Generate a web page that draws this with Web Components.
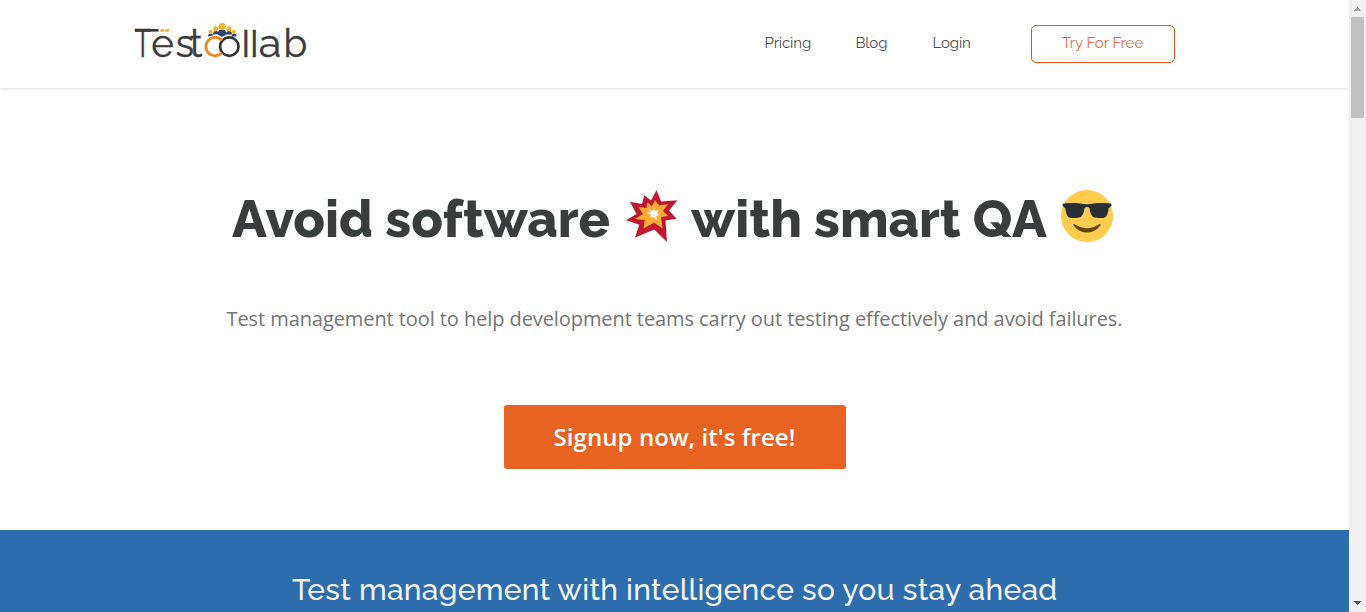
<!DOCTYPE html>
<html lang="en">
<head>
<meta charset="utf-8">
<title>Test Collab</title>
<style>
html,body{margin:0;height:612px;overflow:hidden;background:#fff}
</style>
</head>
<body>
<tc-page></tc-page>
<script>
const define=(name,html)=>{
  const t=document.createElement('template');t.innerHTML=html;
  customElements.define(name,class extends HTMLElement{
    constructor(){super();this.attachShadow({mode:'open'}).append(t.content.cloneNode(true));}
  });
};

define('tc-logo',`<style>:host{display:block;width:180px;height:50px}svg{display:block;overflow:visible}
text{font-family:Raleway,Lato,sans-serif;font-weight:400;font-size:38.5px;fill:#3b3b3b;stroke:#3b3b3b;stroke-width:.4px}
.l{font-family:Inter,sans-serif;font-weight:300;font-size:37px;stroke-width:.5px}</style>
<svg width="180" height="50" viewBox="130 15 180 50">
<text y="56.5" x="134.500" textLength="16.500" lengthAdjust="spacingAndGlyphs">T</text><text y="56.5" x="151.300 175.500 189.500">est</text>
<text y="56.5" x="241.500 250" class="l">ll</text><text y="56.5" x="258.800" textLength="22.500" lengthAdjust="spacingAndGlyphs">a</text><text y="56.5" x="283.500">b</text>
<path d="M135 30.300h23.500" stroke="#3b3b3b" stroke-width="2.700"/>
<path d="M161 29.200h3.500l-1 2.500h-3.500zM166 29.200h3.500l-1 2.500h-3.500z" fill="#f6a51c"/>
<g fill="#2f4570"><path d="M208 36.500q0-3 2.500-3t2.500 2zM213 34.500q0-3.500 3-3.500t3 3zM217.500 34.500q0-5 4.500-5t4.500 5l-4.500 2.500zM226 34.500q0-3.500 3-3.500t3 3.500zM231.500 36.500q0-3 2.500-3t2.500 3z"/></g>
<g fill="#f9b21c"><circle cx="210.500" cy="31.500" r="2"/><circle cx="215.700" cy="28.800" r="2.500"/><circle cx="222" cy="26.300" r="3.400"/><circle cx="229" cy="28.800" r="2.500"/><circle cx="233.800" cy="31.700" r="2"/></g>
<circle cx="229.300" cy="46.600" r="9.200" fill="none" stroke="#333" stroke-width="2.700"/>
<path d="M222 40.500A9.200 9.200 0 1 0 222 52.700" fill="none" stroke="#f58220" stroke-width="2.700"/>
</svg>`);

define('tc-link',`<style>:host{display:block;font:15px/24px Raleway,Lato,sans-serif;color:#4b4f50;letter-spacing:-.12px}</style><slot></slot>`);
define('tc-try',`<style>:host{display:flex;box-sizing:border-box;width:144px;height:38px;border:1px solid #e45414;border-radius:5px;padding:5px 0 0 30px;font:15px/24px Raleway,Lato,sans-serif;color:#e86a48;letter-spacing:-.03px}</style><slot></slot>`);

define('tc-header',`<style>:host{display:flex;box-sizing:border-box;height:88px;padding:15px 174px 0 130px;background:#fff;box-shadow:0 1px 3px rgba(0,0,0,.12)}
nav{display:flex;margin-left:auto;padding-top:10px}
.i{padding-top:6px}.a{width:91px}.b{width:77px}.c{width:98.500px}</style>
<tc-logo></tc-logo><nav><tc-link class="i a">Pricing</tc-link><tc-link class="i b">Blog</tc-link><tc-link class="i c">Login</tc-link><tc-try>Try For Free</tc-try></nav>`);

define('tc-boom',`<style>:host{display:block;width:52px;height:52px}svg{display:block}</style>
<svg width="52" height="52" viewBox="0 0 52 52"><path fill="#be1931" d="M30.500 0L35 11.500L51.500 10.300L43 20.500L50.500 28.700L39.500 30.500L41 52L28.300 39.500L9 47.500L13.300 34.700L0 30.300L10.500 24L4 11.700L16 14L18.300 5.300L25 10.500Z"/><path fill="#ffac33" d="M29 10L33 15.500L42 14L37 21L42 26L35 27L36.500 38.500L28 32.500L17.500 38.500L18.700 30L8.700 29L17 24L12.500 17L20.500 18L21.500 12.500L26 16Z"/><path fill="#fff" d="M28 18l1 3 4-1-2 3 2 2-3 1 1 4-4-3-3 1 1-3-4-2 4-1-2-3 4 2z"/></svg>`);
define('tc-cool',`<style>:host{display:block;width:52px;height:52px}svg{display:block}</style>
<svg width="52" height="52" viewBox="0 0 36 36"><circle cx="18" cy="18" r="18" fill="#ffcc4d"/><path fill="#292f33" d="M1.240 11.018c.24.239 1.438.957 1.677 1.675.24.717.72 4.784 2.158 5.981 1.483 1.232 7.077.774 8.148.24 2.397-1.195 2.691-4.531 3.115-6.221.239-.957 1.677-.957 1.677-.957s1.438 0 1.678.956c.424 1.691.72 5.027 3.115 6.221 1.072.535 6.666.994 8.151-.238 1.436-1.197 1.915-5.264 2.155-5.982.238-.717 1.438-1.435 1.677-1.674.241-.239.241-1.196 0-1.436-.479-.478-6.134-.904-12.223-.239-1.215.133-1.677.478-4.554.478-2.875 0-3.339-.346-4.553-.478-6.085-.666-11.741-.24-12.221.239-.239.239-.239 1.197 0 1.435z"/><path fill="#664500" d="M27.335 23.629c-.178-.161-.444-.171-.635-.029-.039.029-3.922 2.900-8.700 2.900-4.766 0-8.662-2.871-8.700-2.900-.191-.142-.457-.13-.635.029-.177.160-.217.424-.094.628C8.700 24.472 11.788 29.500 18 29.500s9.301-5.028 9.429-5.243c.123-.205.084-.468-.094-.628z"/></svg>`);

define('tc-hero',`<style>:host{display:flex;flex-direction:column;height:442px}
h1{display:flex;margin:102px 0 0 232px;height:52px;font:800 52px/58px Raleway,Lato,sans-serif;color:#393d3e;white-space:nowrap}
.a{width:394px;letter-spacing:.05px}.b{width:370px}tc-boom{width:65px}
p{margin:63px 0 0 226.500px;font:20px/27px "Open Sans",sans-serif;color:#747474;white-space:nowrap;letter-spacing:-.08px}
button{margin:73px 0 0 504px;width:342px;height:64px;border:0;border-radius:3px;background:#e86321;color:#fff;font:600 24px/64px "Open Sans",sans-serif;padding:0 1px 0 0;letter-spacing:.07px}</style>
<h1><span class="a">Avoid software</span><tc-boom></tc-boom><span class="b">with smart QA</span><tc-cool></tc-cool></h1>
<p>Test management tool to help development teams carry out testing effectively and avoid failures.</p>
<button>Signup now, it's free!</button>`);

define('tc-band',`<style>:host{display:block;height:82px;background:#2d6dad}h2{margin:0 0 0 292px;padding-top:41px;font:500 30px/38px Raleway,Lato,sans-serif;color:#f2f2f2;white-space:nowrap;letter-spacing:.27px}</style><h2><slot></slot></h2>`);

define('tc-scrollbar',`<style>:host{display:flex;flex-direction:column;width:17px;height:612px;background:#f1f1f1;align-items:center}
i{display:block;width:13px;height:101px;background:#c1c1c1}svg{display:block}.d{margin-top:auto}</style>
<svg width="17" height="17"><path d="M8 7h1v1h1v1h1v1h1v1H5v-1h1V9h1V8h1z" fill="#a3a3a3"/></svg><i></i>
<svg class="d" width="17" height="17"><path d="M5 6h7v1h-1v1h-1v1H9v1H8V9H7V8H6V7H5z" fill="#505050"/></svg>`);

define('tc-page',`<style>:host{display:flex;width:1366px;height:612px}main{width:1349px;overflow:hidden}tc-header{position:relative}</style>
<main><tc-header></tc-header><tc-hero></tc-hero><tc-band>Test management with intelligence so you stay ahead</tc-band></main><tc-scrollbar></tc-scrollbar>`);
</script>
</body>
</html>
